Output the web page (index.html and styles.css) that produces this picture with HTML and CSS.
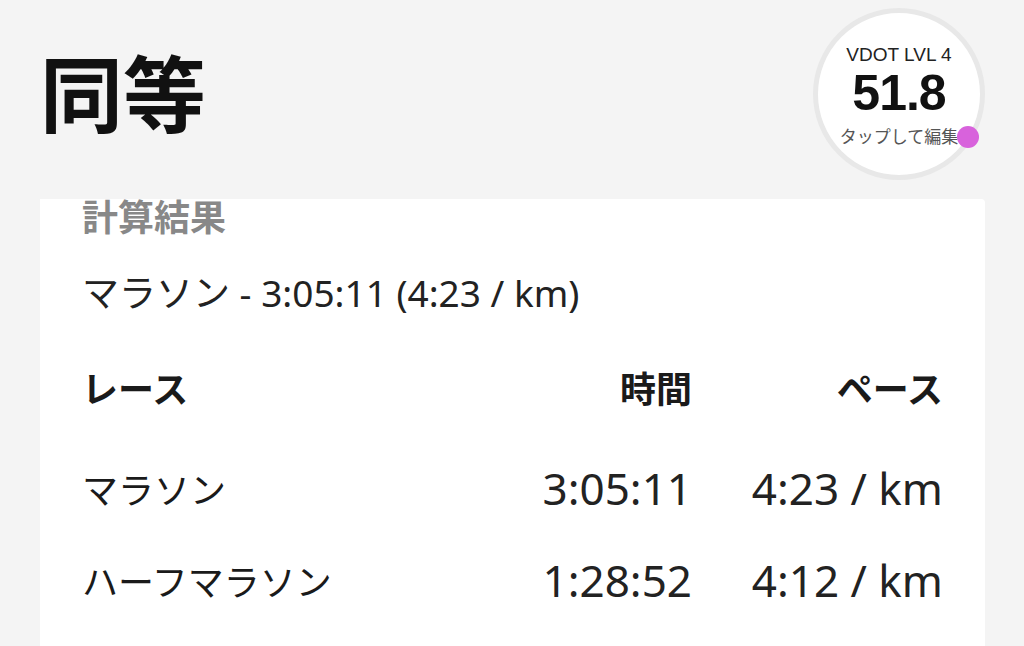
FILE: index.html
```html
<!DOCTYPE html>
<html lang="ja">
<head>
    <meta charset="UTF-8">
    <meta name="viewport" content="width=device-width, initial-scale=1.0">
    <title>同等</title>
    <link rel="stylesheet" href="styles.css">
</head>
<body>
    <div class="header">
        <h1 class="title">同等</h1>
        <div class="vdot">
            <div class="vdot-level">VDOT LVL 4</div>
            <div class="vdot-value">51.8</div>
            <div class="vdot-edit">タップして編集</div>
            <span class="vdot-knob"></span>
        </div>
    </div>
    <div class="card">
        <h2 class="card-title">計算結果</h2>
        <div class="summary">マラソン - 3:05:11 (4:23 / km)</div>
        <!-- Result table -->
        <div class="results">
            <div class="row head">
                <div class="race">レース</div>
                <div class="time">時間</div>
                <div class="pace">ペース</div>
            </div>
            <div class="row">
                <div class="race">マラソン</div>
                <div class="time num">3:05:11</div>
                <div class="pace num">4:23 / km</div>
            </div>
            <div class="row">
                <div class="race">ハーフマラソン</div>
                <div class="time num">1:28:52</div>
                <div class="pace num">4:12 / km</div>
            </div>
        </div>
    </div>
</body>
</html>
```

FILE: styles.css
```css
/* General styling */
body {
    font-family: "Noto Sans", "Noto Sans CJK JP", sans-serif;
    background-color: #f4f4f4;
    color: #1a1a1a;
    margin: 0;
    padding: 0;
    overflow: hidden;
}
.header {
    display: flex;
    justify-content: space-between;
    align-items: center;
    padding: 8px 39px 0 40px;
}
.title {
    margin: -8px 0 0 0;
    font-family: "Noto Sans CJK JP", sans-serif;
    font-size: 83px;
    font-weight: 700;
    line-height: 1;
    color: #111;
}
/* VDOT circle */
.vdot {
    position: relative;
    width: 162px;
    height: 162px;
    border: 5px solid #e8e8e8;
    border-radius: 50%;
    background-color: #fff;
    display: flex;
    flex-direction: column;
    align-items: center;
}
.vdot-level {
    margin-top: 30px;
    font-family: "Liberation Sans", Arial, sans-serif;
    font-size: 19px;
    line-height: 24px;
    color: #222;
}
.vdot-value {
    font-family: "Liberation Sans", Arial, sans-serif;
    font-size: 50px;
    font-weight: 700;
    line-height: 52px;
    letter-spacing: -1px;
    color: #111;
}
.vdot-edit {
    margin-top: 5px;
    font-family: "Noto Sans CJK JP", sans-serif;
    font-size: 17px;
    line-height: 24px;
    color: #555;
}
.vdot-knob {
    position: absolute;
    left: 139px;
    top: 113px;
    width: 22px;
    height: 22px;
    border-radius: 50%;
    background-color: #d862dc;
}
/* Result card */
.card {
    margin: 19px 39px 0 40px;
    height: 460px;
    background-color: #fff;
    border-radius: 0 4px 0 0;
    padding: 0 42px;
}
.card-title {
    margin: 0;
    font-family: "Noto Sans CJK JP", sans-serif;
    font-size: 36px;
    font-weight: 700;
    line-height: 32px;
    color: #888;
}
.summary {
    margin-top: 38px;
    font-size: 37px;
    line-height: 48px;
    color: #222;
}
.results {
    margin-top: 24px;
}
.row {
    display: grid;
    grid-template-columns: 1fr auto 251px;
    align-items: center;
    height: 92px;
}
.row.head {
    margin-bottom: 9px;
    font-family: "Noto Sans CJK JP", sans-serif;
    font-weight: 700;
}
.race {
    font-family: "Noto Sans CJK JP", sans-serif;
    font-size: 36px;
}
.time, .pace {
    text-align: right;
    font-size: 36px;
}
.num {
    font-size: 44px;
    color: #222;
}
.race, .time, .pace {
    line-height: 50px;
}
```
